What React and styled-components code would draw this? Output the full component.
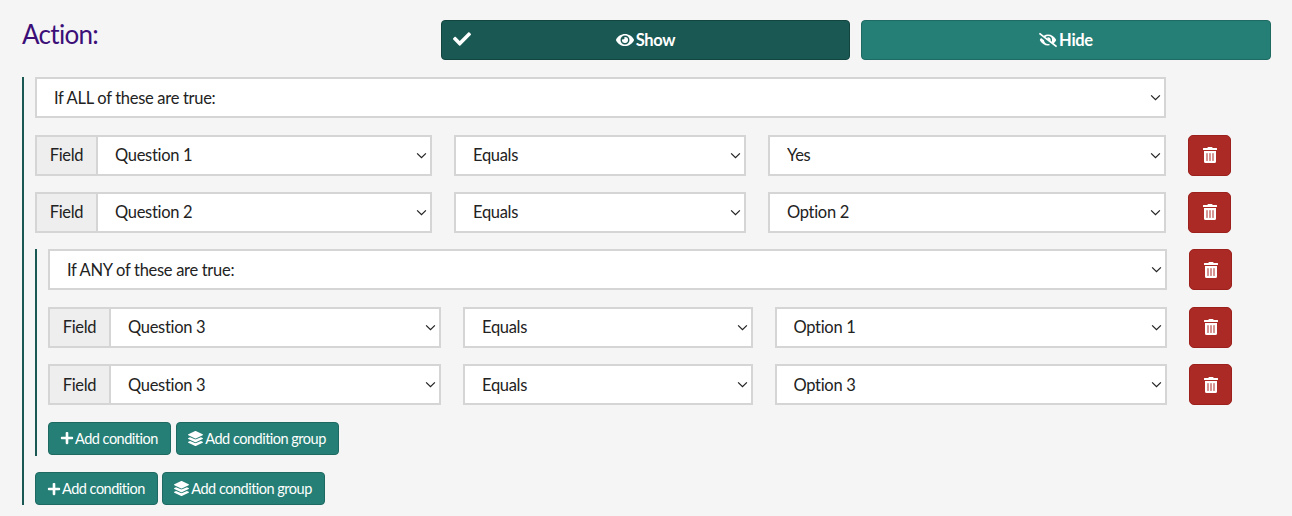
import React from 'react';
import styled, { createGlobalStyle } from 'styled-components';
import { FaCheck, FaEye, FaEyeSlash, FaLayerGroup, FaPlus, FaTrashAlt } from 'react-icons/fa';

const chevron =
  "url(\"data:image/svg+xml,%3Csvg xmlns='http://www.w3.org/2000/svg' viewBox='0 0 12 8'%3E%3Cpath d='M1 1.5l5 5 5-5' fill='none' stroke='%23222' stroke-width='1.4'/%3E%3C/svg%3E\")";

const outerColumns = '397px 292px 398px 43px';
const innerColumns = '393px 289.5px 392.5px 43px';

const GlobalStyle = createGlobalStyle`
  html, body {
    margin: 0;
    background: #f5f5f5;
  }

  * {
    box-sizing: border-box;
  }
`;

const Page = styled.div`
  width: 1292px;
  height: 516px;
  overflow: hidden;
  padding: 20px 21px 0 22px;
  font-family: Lato, "Liberation Sans", sans-serif;
  font-size: 16.5px;
  letter-spacing: -0.3px;
  color: #222;
`;

const ActionBar = styled.div`
  display: flex;
  align-items: flex-start;
  margin-bottom: 17.2px;
`;

const Title = styled.h2`
  flex: 0 0 419px;
  margin: 0;
  font-size: 26px;
  line-height: 28px;
  letter-spacing: -0.7px;
  font-weight: 400;
  color: #3c0f78;
`;

const ToggleGroup = styled.div`
  flex: 1;
  display: grid;
  grid-template-columns: 409px 410px;
  gap: 11px;
`;

const ToggleButton = styled.button`
  position: relative;
  height: 40px;
  display: flex;
  align-items: center;
  justify-content: center;
  gap: 2px;
  padding: 0 0 1px;
  font: 700 16.5px Lato, sans-serif;
  letter-spacing: -0.3px;
  color: #fff;
  background: ${props => (props.$active ? '#1a5953' : '#267f76')};
  border: 1px solid ${props => (props.$active ? '#134540' : '#1e6a62')};
  border-radius: 4px;
`;

const ActiveCheck = styled(FaCheck)`
  position: absolute;
  left: 11px;
  top: 9px;
  font-size: 18px;
`;

const Group = styled.div`
  border-left: 2px solid #1a5953;
  padding-left: 11px;
`;

const Row = styled.div`
  display: grid;
  grid-template-columns: ${props => props.$columns};
  column-gap: 22px;
  height: 41px;
  margin-bottom: 16.4px;
`;

const Select = styled.select`
  appearance: none;
  width: 100%;
  min-width: 0;
  height: 41px;
  padding: 0 30px 0 17px;
  font: 400 16.5px Lato, sans-serif;
  letter-spacing: -0.3px;
  color: #222;
  background: #fff ${chevron} no-repeat right 3px center / 11px 7px;
  border: 2px solid #d5d5d5;
  border-radius: 0;
`;

const HeadSelect = styled(Select)`
  grid-column: 1 / span 3;
`;

const InputGroup = styled.div`
  display: flex;
  min-width: 0;
`;

const Addon = styled.span`
  flex: 0 0 61px;
  display: flex;
  align-items: center;
  justify-content: center;
  background: #eee;
  border: 2px solid #d5d5d5;
  border-right: 0;
`;

const DeleteButton = styled.button`
  width: 43px;
  height: 41px;
  display: flex;
  align-items: center;
  justify-content: center;
  padding: 0;
  font-size: 16px;
  color: #fff;
  background: #ab2a25;
  border: 1px solid #9c201c;
  border-radius: 5px;
`;

const AddBar = styled.div`
  display: flex;
  gap: ${props => props.$gap}px;
  height: 33px;
`;

const AddButton = styled.button`
  display: flex;
  align-items: center;
  gap: 1px;
  height: 33px;
  padding: 0 12px 0 11px;
  font: 400 14.5px Lato, sans-serif;
  letter-spacing: -0.5px;
  color: #fff;
  background: #267f76;
  border: 1px solid #1e6a62;
  border-radius: 4px;
`;

const LayerIcon = styled(FaLayerGroup)`
  margin-right: 1.5px;
`;

const NestedGroup = styled(Group)`
  height: 207px;
  margin-bottom: 16px;
`;

const Condition = ({ columns, field, answer }) => (
  <Row $columns={columns}>
    <InputGroup>
      <Addon>Field</Addon>
      <Select defaultValue={field}>
        <option>{field}</option>
      </Select>
    </InputGroup>
    <Select defaultValue="Equals">
      <option>Equals</option>
    </Select>
    <Select defaultValue={answer}>
      <option>{answer}</option>
    </Select>
    <DeleteButton aria-label="Delete">
      <FaTrashAlt />
    </DeleteButton>
  </Row>
);

const AddButtons = ({ gap }) => (
  <AddBar $gap={gap}>
    <AddButton>
      <FaPlus size={14} />
      Add condition
    </AddButton>
    <AddButton>
      <LayerIcon size={15} />
      Add condition group
    </AddButton>
  </AddBar>
);

const App = () => (
  <>
    <GlobalStyle />
    <Page>
      <ActionBar>
        <Title>Action:</Title>
        <ToggleGroup>
          <ToggleButton $active>
            <ActiveCheck />
            <FaEye size={18} />
            Show
          </ToggleButton>
          <ToggleButton>
            <FaEyeSlash size={18} />
            Hide
          </ToggleButton>
        </ToggleGroup>
      </ActionBar>

      <Group>
        <Row $columns={outerColumns}>
          <HeadSelect defaultValue="all">
            <option value="all">If ALL of these are true:</option>
          </HeadSelect>
        </Row>
        <Condition columns={outerColumns} field="Question 1" answer="Yes" />
        <Condition columns={outerColumns} field="Question 2" answer="Option 2" />

        <NestedGroup>
          <Row $columns={innerColumns}>
            <HeadSelect defaultValue="any">
              <option value="any">If ANY of these are true:</option>
            </HeadSelect>
            <DeleteButton aria-label="Delete">
              <FaTrashAlt />
            </DeleteButton>
          </Row>
          <Condition columns={innerColumns} field="Question 3" answer="Option 1" />
          <Condition columns={innerColumns} field="Question 3" answer="Option 3" />
          <AddButtons gap={5} />
        </NestedGroup>

        <AddButtons gap={4} />
      </Group>
    </Page>
  </>
);

export default App;
